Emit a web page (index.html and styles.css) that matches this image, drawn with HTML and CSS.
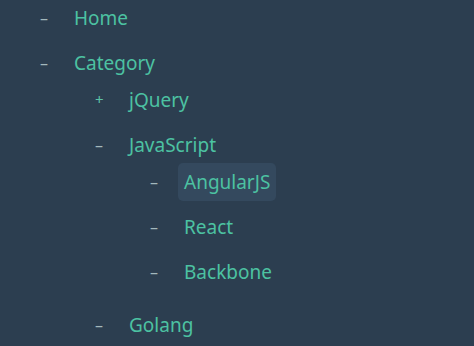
FILE: index.html
```html
<!DOCTYPE html>
<html lang="en">
<head>
<meta charset="utf-8">
<title>Tree</title>
<link rel="stylesheet" href="styles.css">
</head>
<body>
<ul class="tree">
  <li class="node">
    <div class="row"><span class="toggle">–</span><span class="label">Home</span></div>
  </li>
  <li class="node">
    <div class="row"><span class="toggle">–</span><span class="label">Category</span></div>
    <ul class="children">
      <li class="node">
        <div class="row"><span class="toggle plus">+</span><span class="label">jQuery</span></div>
      </li>
      <li class="node">
        <div class="row"><span class="toggle">–</span><span class="label">JavaScript</span></div>
        <ul class="children">
          <li class="node">
            <div class="row"><span class="toggle">–</span><span class="label active">AngularJS</span></div>
          </li>
          <li class="node">
            <div class="row"><span class="toggle">–</span><span class="label">React</span></div>
          </li>
          <li class="node">
            <div class="row"><span class="toggle">–</span><span class="label">Backbone</span></div>
          </li>
        </ul>
      </li>
      <li class="node">
        <div class="row"><span class="toggle">–</span><span class="label">Golang</span></div>
      </li>
    </ul>
  </li>
</ul>
</body>
</html>
```
FILE: styles.css
```css
html, body {
  margin: 0;
  padding: 0;
  background: #2c3e50;
  height: 100%;
  overflow: hidden;
}

body {
  font-family: "Noto Sans", "Open Sans", sans-serif;
  color: #4cc2a2;
}

.tree {
  list-style: none;
  margin: -1px 0 0 0;
  padding: 0 0 0 40px;
}

.children {
  list-style: none;
  margin: 0;
  padding: 0 0 0 55px;
}

.node {
  margin: 0;
  padding: 0 0 8px 0;
}

.row {
  display: flex;
  align-items: center;
  height: 37px;
}

.toggle {
  width: 28px;
  flex: none;
  font-size: 16px;
  color: #a3b8bc;
  line-height: 1;
}

.toggle.plus {
  color: #5cc3a8;
  font-size: 15px;
}

.label {
  display: flex;
  align-items: center;
  height: 38px;
  padding: 0 6px;
  font-size: 19px;
  border-radius: 5px;
}

.label.active {
  background: #34495e;
}
```
